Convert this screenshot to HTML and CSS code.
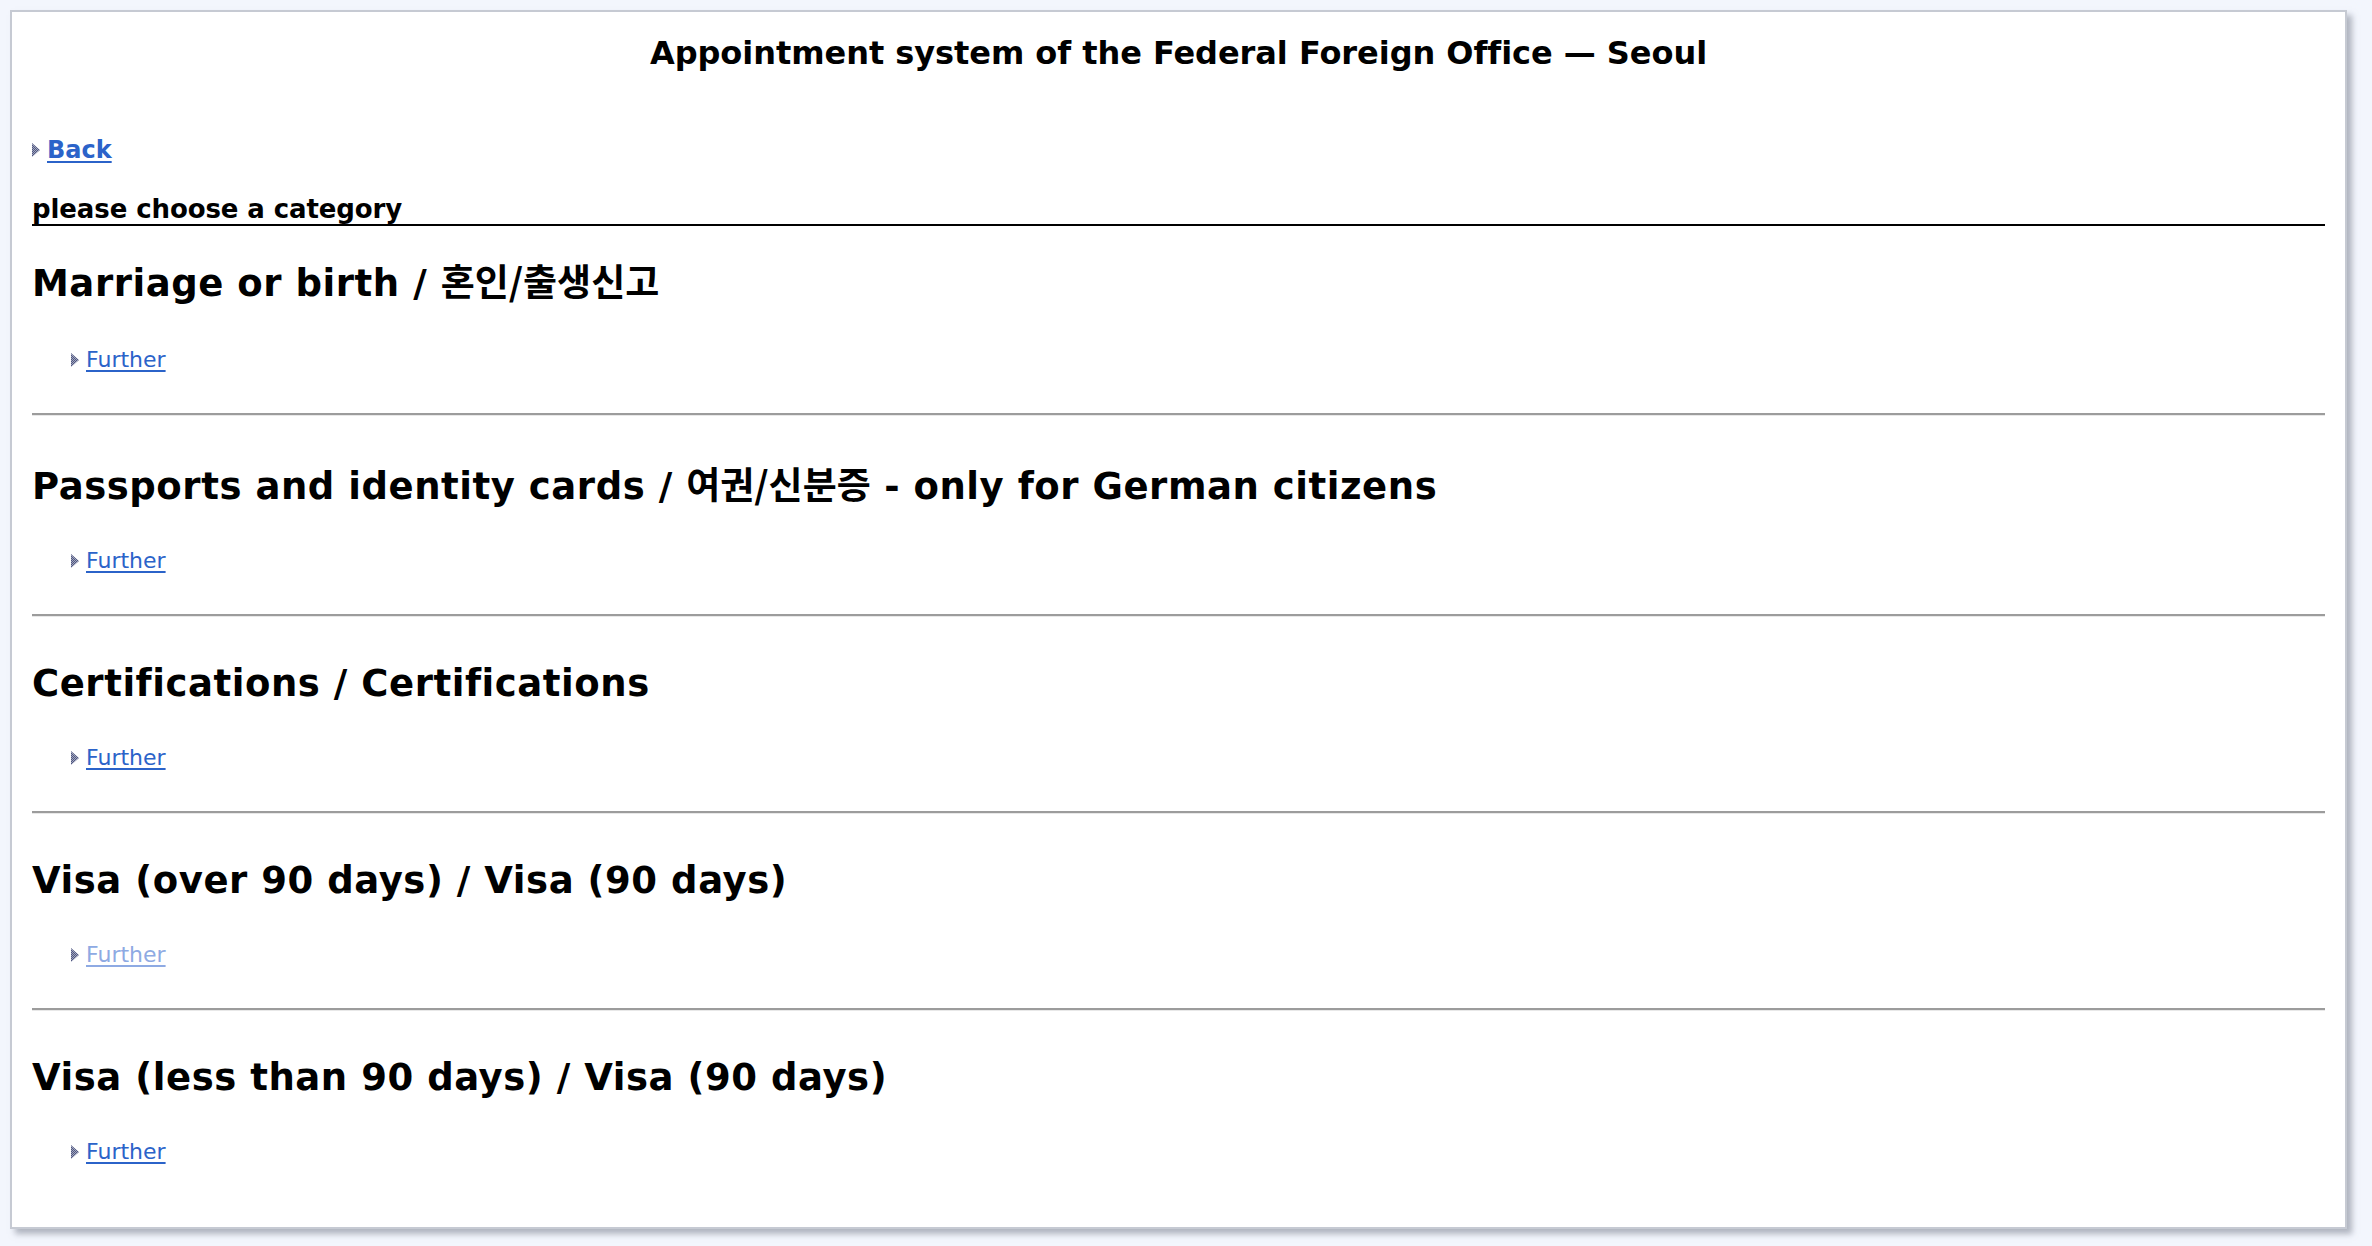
FILE: index.html
```html
<!DOCTYPE html>
<html lang="en">
<head>
<meta charset="utf-8">
<title>Appointment system of the Federal Foreign Office — Seoul</title>
<link rel="stylesheet" href="styles.css">
</head>
<body>
<svg width="0" height="0" class="defs" aria-hidden="true">
  <defs>
    <pattern id="dither" width="2" height="2" patternUnits="userSpaceOnUse">
      <rect width="2" height="2" fill="#a4a9c0"/>
      <rect width="1" height="1" fill="#4f5680"/>
      <rect x="1" y="1" width="1" height="1" fill="#4f5680"/>
    </pattern>
  </defs>
</svg>
<div class="frame">
  <h1 class="title">Appointment system of the Federal Foreign Office — Seoul</h1>
  <p class="back"><svg class="arrow" width="8" height="14" viewBox="0 0 8 14"><polygon points="0,0 8,7 0,14" fill="url(#dither)"/></svg><a href="#">Back</a></p>
  <h2 class="choose">please choose a category</h2>

  <div class="category first">
    <h3 class="cat-title">Marriage or birth / <span class="ko">혼인/출생신고</span></h3>
    <p class="further"><svg class="arrow" width="8" height="14" viewBox="0 0 8 14"><polygon points="0,0 8,7 0,14" fill="url(#dither)"/></svg><a href="#">Further</a></p>
  </div>
  <hr class="sep">
  <div class="category">
    <h3 class="cat-title">Passports and identity cards / <span class="ko">여권/신분증</span> - only for German citizens</h3>
    <p class="further"><svg class="arrow" width="8" height="14" viewBox="0 0 8 14"><polygon points="0,0 8,7 0,14" fill="url(#dither)"/></svg><a href="#">Further</a></p>
  </div>
  <hr class="sep">
  <div class="category">
    <h3 class="cat-title">Certifications / Certifications</h3>
    <p class="further"><svg class="arrow" width="8" height="14" viewBox="0 0 8 14"><polygon points="0,0 8,7 0,14" fill="url(#dither)"/></svg><a href="#">Further</a></p>
  </div>
  <hr class="sep">
  <div class="category">
    <h3 class="cat-title">Visa (over 90 days) / Visa (90 days)</h3>
    <p class="further"><svg class="arrow" width="8" height="14" viewBox="0 0 8 14"><polygon points="0,0 8,7 0,14" fill="url(#dither)"/></svg><a href="#" class="visited">Further</a></p>
  </div>
  <hr class="sep">
  <div class="category last">
    <h3 class="cat-title">Visa (less than 90 days) / Visa (90 days)</h3>
    <p class="further"><svg class="arrow" width="8" height="14" viewBox="0 0 8 14"><polygon points="0,0 8,7 0,14" fill="url(#dither)"/></svg><a href="#">Further</a></p>
  </div>
</div>
</body>
</html>
```

FILE: styles.css
```css
html, body {
  margin: 0;
  padding: 0;
}
body {
  background: #f3f6fd;
  padding: 10px 25px 21px 10px;
  font-family: "DejaVu Sans", Verdana, "Noto Sans CJK KR", sans-serif;
  color: #000;
}
.defs {
  position: absolute;
  width: 0;
  height: 0;
}
.frame {
  background: #fff;
  border: 2px solid #c6cad3;
  box-shadow: 5px 5px 6px rgba(120, 126, 140, 0.55);
  padding: 21px 20px 62px 20px;
}
.title {
  margin: 0;
  text-align: center;
  font-size: 32px;
  line-height: 40px;
  font-weight: bold;
  letter-spacing: -0.05px;
}
.back {
  margin: 62px 0 0 0;
  font-size: 24px;
  line-height: 30px;
  font-weight: bold;
  display: flex;
  align-items: center;
}
.arrow {
  flex: none;
  margin-right: 7px;
}
a {
  color: #2b63c9;
  text-decoration: underline;
  text-decoration-thickness: 2px;
  text-underline-offset: 3px;
}
a.visited {
  color: #8eaae3;
}
.choose {
  margin: 30px 0 0 0;
  font-size: 26px;
  line-height: 29px;
  font-weight: bold;
  letter-spacing: -0.1px;
  border-bottom: 2px solid #000;
}
.category {
  padding: 45px 0 40px 0;
}
.category.first {
  padding-top: 32px;
}
.category.last {
  padding-bottom: 0;
}
.cat-title {
  margin: 0;
  font-size: 37px;
  line-height: 44px;
  font-weight: bold;
  letter-spacing: 0.55px;
}
.ko {
  font-family: "Noto Sans CJK KR", sans-serif;
  font-weight: bold;
  letter-spacing: 0;
}
.further {
  margin: 39px 0 0 39px;
  font-size: 22px;
  line-height: 26px;
  display: flex;
  align-items: center;
}
.category.first .further {
  margin-top: 41px;
}
.further .arrow {
  margin-right: 7px;
}
.sep {
  margin: 0;
  height: 0;
  border: 0;
  border-top: 2px solid #9c9c9c;
  border-bottom: 1px solid #e8e8e8;
}
```
